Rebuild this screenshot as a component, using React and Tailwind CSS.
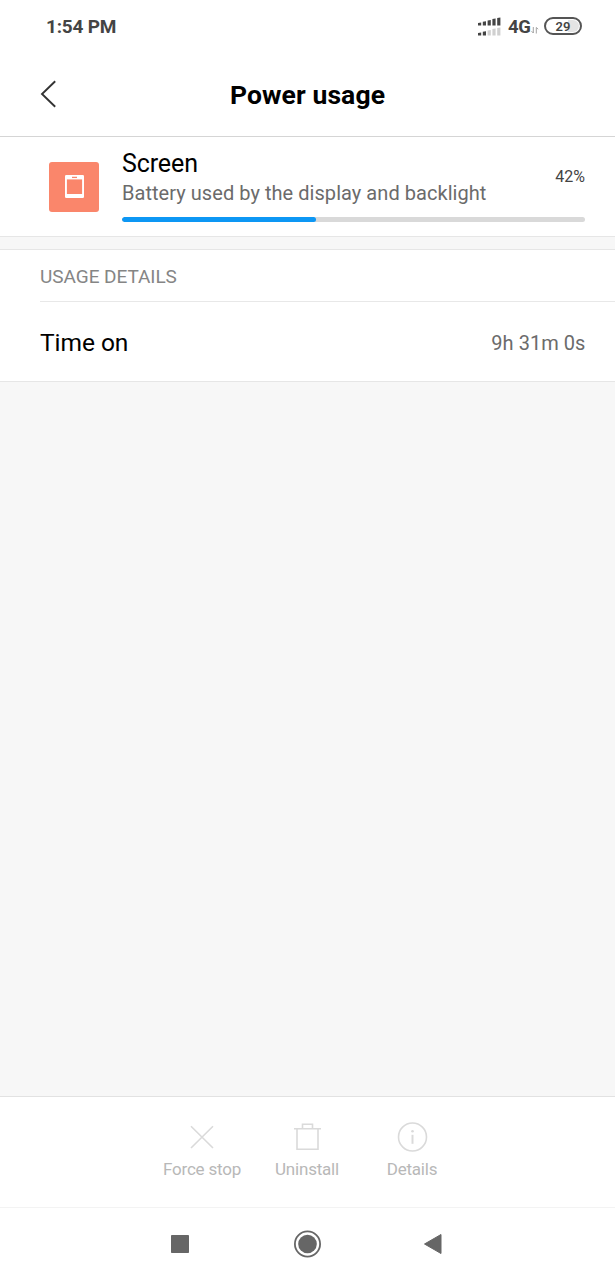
const signalBars = [
  { x: 0, h: 3.2 },
  { x: 4.8, h: 4.4 },
  { x: 9.6, h: 5.6 },
  { x: 14.4, h: 7 },
  { x: 19.2, h: 8.2 },
];

function StatusBar() {
  return (
    <div className="flex h-[53px] items-center pt-[1px] pr-[33px] pl-[46px] text-[#444]">
      <span className="text-[19px] font-bold leading-6 tracking-[-0.2px]">1:54 PM</span>
      <svg className="ml-auto" width="23" height="20" viewBox="0 0 23 20">
        {signalBars.map((b) => (
          <path key={b.x} d={`M${b.x} 8.6v${0.5 - b.h}l3.2-.5V8.6z`} fill="#444" />
        ))}
        {signalBars.map((b, i) => (
          <path key={b.x} d={`M${b.x} 18.6v${0.5 - b.h}l3.2-.5V18.6z`} fill={i < 2 ? "#444" : "#d0d0d0"} />
        ))}
      </svg>
      <span className="ml-[7px] w-[23px] text-[18.5px] font-bold leading-6 tracking-[-0.3px]">4G</span>
      <svg className="mt-[6px] mr-[5px]" width="8" height="8" viewBox="0 0 8 8" fill="none" stroke="#999" strokeWidth="0.9">
        <path d="M2.3 1v6L.5 5.2M5.3 7.5v-6L7.2 3.2" />
      </svg>
      <div className="-mt-[2px] flex h-[18px] w-[38px] rounded-full border-2 border-[#555] p-px">
        <span className="flex flex-1 items-center justify-center rounded-full bg-linear-to-r from-white from-65% to-[#e4e4e4] to-65% text-[13px] font-semibold leading-none">
          29
        </span>
      </div>
    </div>
  );
}

function Header() {
  return (
    <header className="flex h-[84px] items-center border-b border-[#d5d5d5] pr-[57px] pl-[40px]">
      <svg className="-mt-[2px]" width="17" height="28" viewBox="0 0 17 28" fill="none" stroke="#333" strokeWidth="1.9">
        <path d="M15.2 1.2 2 14l13.2 12.8" />
      </svg>
      <h1 className="flex-1 text-center text-[26.5px] font-bold leading-8 tracking-[0.1px] text-black">Power usage</h1>
    </header>
  );
}

function UsageSummary() {
  return (
    <section className="flex h-[100px] border-b border-[#e6e6e6] pr-[30px] pl-[49.4px]">
      <div className="mt-[24.6px] flex h-[50px] w-[50px] items-center justify-center rounded-[3px] bg-[#fa866b]">
        <svg width="19" height="23" viewBox="0 0 19 23">
          <rect width="19" height="23" rx="1.2" fill="#fff" />
          <rect x="1.9" y="4.4" width="15.2" height="14.6" fill="#fa866b" />
          <path d="M7 2.4h5" stroke="#fa866b" strokeWidth="1.3" />
        </svg>
      </div>
      <div className="ml-[22.6px] flex-1">
        <div className="flex h-[79.5px] justify-between">
          <div className="pt-[12px]">
            <h2 className="text-[25px] leading-[30px] tracking-[-0.1px] text-black">Screen</h2>
            <p className="text-[20px] leading-[29px] tracking-[0.05px] text-[#6b6b6b]">Battery used by the display and backlight</p>
          </div>
          <span className="pt-[30px] text-[16px] leading-5 text-[#444]">42%</span>
        </div>
        <div className="h-[5px] overflow-hidden rounded-full bg-[#d9d9d9]">
          <div className="h-full w-[42%] rounded-full bg-[#0d97f4]" />
        </div>
      </div>
    </section>
  );
}

function UsageDetails() {
  return (
    <section className="mt-[12px] h-[133px] border-y border-[#e6e6e6] bg-white pl-[40px]">
      <h3 className="flex h-[52px] items-center border-b border-[#e8e8e8] pt-[3px] text-[19px] tracking-[-0.05px] text-[#858585]">
        USAGE DETAILS
      </h3>
      <div className="flex h-[79px] items-center justify-between pt-[2px] pr-[29.5px]">
        <span className="pt-[2px] text-[24.5px] tracking-[-0.05px] text-black">Time on</span>
        <span className="text-[20px] tracking-[0.05px] text-[#6b6b6b]">9h 31m 0s</span>
      </div>
    </section>
  );
}

function Action({ label, children }) {
  return (
    <div className="flex w-[105px] flex-col items-center">
      <svg width="32" height="32" viewBox="0 0 32 32" fill="none" stroke="#dadada" strokeWidth="1.6">
        {children}
      </svg>
      <span className="mt-[6px] text-[17px] leading-5 tracking-[-0.2px] whitespace-nowrap text-[#b8b8b8]">{label}</span>
    </div>
  );
}

function ActionBar() {
  return (
    <div className="flex h-[111px] justify-center border-t border-[#e2e2e2] bg-white pt-[24px] pr-[1px]">
      <Action label="Force stop">
        <path d="M5 5.2 27 27M27 5.2 5 27" />
      </Action>
      <Action label="Uninstall">
        <path d="M3 7.7h27M6 7.7v20.6h21V7.7M11.5 7.5V3.3h10v4.2" />
      </Action>
      <Action label="Details">
        <circle cx="16.5" cy="16" r="14" />
        <path d="M16.5 13.8v9" strokeWidth="2" />
        <circle cx="16.5" cy="10.3" r="1.3" fill="#dadada" stroke="none" />
      </Action>
    </div>
  );
}

function NavigationBar() {
  return (
    <nav className="h-[73px] border-t border-[#f3f3f3] bg-white">
      <svg width="615" height="72" viewBox="0 0 615 72" fill="#666">
        <rect x="171" y="27" width="18" height="18" rx="0.8" />
        <circle cx="307.5" cy="36" r="9.3" />
        <circle cx="307.5" cy="36" r="12.6" fill="none" stroke="#666" strokeWidth="1.8" />
        <path d="M424.5 36 441 26.5v19z" stroke="#666" strokeWidth="1" strokeLinejoin="round" />
      </svg>
    </nav>
  );
}

export default function App() {
  return (
    <div className="flex h-[1280px] w-[615px] flex-col overflow-hidden bg-[#f7f7f7] font-[Roboto,sans-serif]">
      <div className="bg-white">
        <StatusBar />
        <Header />
        <UsageSummary />
      </div>
      <UsageDetails />
      <div className="flex-1" />
      <ActionBar />
      <NavigationBar />
    </div>
  );
}
